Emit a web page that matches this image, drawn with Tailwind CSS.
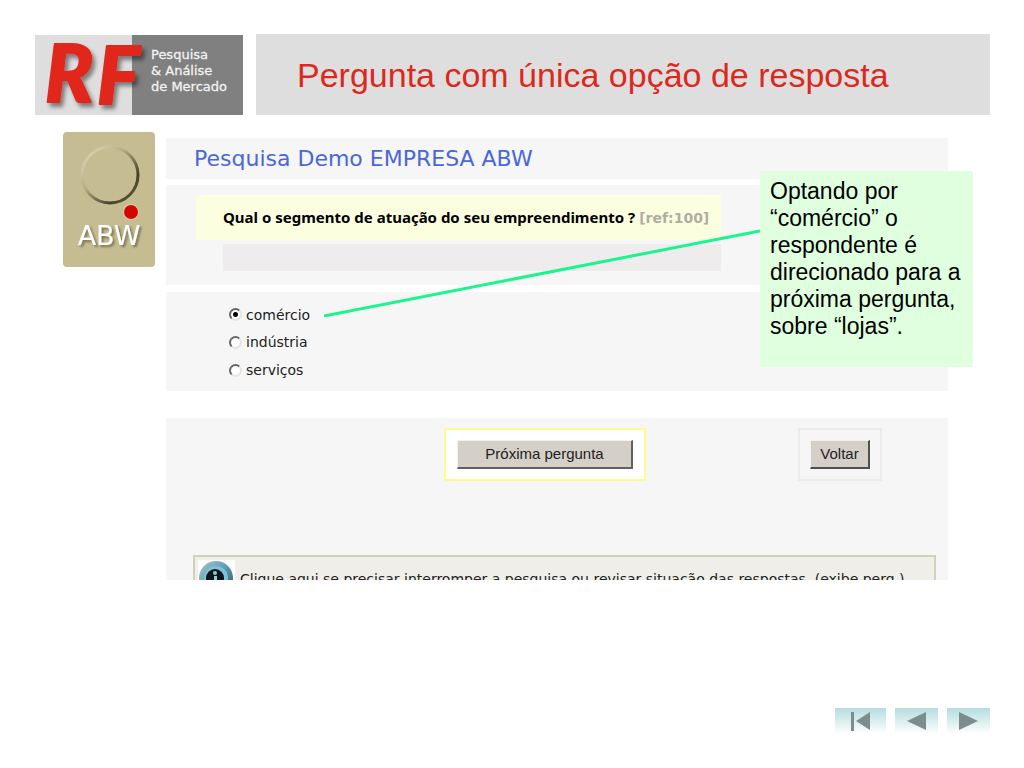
<!DOCTYPE html>
<html lang="pt-BR">
<head>
  <meta charset="UTF-8" />
  <meta name="viewport" content="width=device-width, initial-scale=1.0" />
  <title>Pesquisa Demo EMPRESA ABW</title>
  <script src="https://cdn.jsdelivr.net/npm/@tailwindcss/browser@4"></script>
</head>
<body class="min-h-screen flex flex-col bg-white text-black font-['Liberation_Sans',Arial,sans-serif]">

<header class="flex gap-[13px] pl-[35px] pr-[34px] pt-[34px]">
  <svg class="w-[208px] h-[81px] shrink-0 overflow-visible" viewBox="0 0 208 81" role="img" aria-label="RF Pesquisa &amp; Análise de Mercado">
    <defs>
      <filter id="logoShadow" x="-20%" y="-20%" width="150%" height="150%">
        <feDropShadow dx="3" dy="4" stdDeviation="2" flood-color="#000" flood-opacity=".45" />
      </filter>
    </defs>
    <rect y="1" width="97" height="80" fill="#dedede" />
    <rect x="97" y="1" width="111" height="80" fill="#808080" />
    <g filter="url(#logoShadow)" fill="#e1261c" stroke="#e1261c" stroke-width="2" stroke-linejoin="round" font-family="Lato, sans-serif" font-weight="900" font-style="italic">
      <text x="10" y="68" font-size="80">R</text>
      <text x="62" y="70" font-size="80">F</text>
    </g>
    <g fill="#f2f2f2" stroke="#f2f2f2" stroke-width=".3" font-family="'DejaVu Sans', sans-serif" font-size="13">
      <text x="116" y="25">Pesquisa</text>
      <text x="116" y="41">&amp; Análise</text>
      <text x="116" y="57">de Mercado</text>
    </g>
  </svg>
  <div class="flex-1 flex items-center bg-[#dedede] pl-[41px]">
    <h1 class="text-[34px] leading-10 text-[#dc291e]">Pergunta com única opção de resposta</h1>
  </div>
</header>

<main class="flex items-start gap-[11px] pl-[63px] pr-[76px] pt-[17px]">
  <!-- client badge -->
  <svg class="w-[92px] h-[135px] shrink-0" viewBox="0 0 92 135" role="img" aria-label="ABW">
    <defs>
      <linearGradient id="ring" x1="0" y1="0" x2="1" y2="1">
        <stop offset="0" stop-color="#e4dec0" />
        <stop offset=".4" stop-color="#b5ad82" />
        <stop offset=".75" stop-color="#45402a" />
        <stop offset="1" stop-color="#6b6444" />
      </linearGradient>
      <filter id="abwShadow">
        <feDropShadow dx="2" dy="2" stdDeviation="1" flood-color="#5a5436" flood-opacity=".7" />
      </filter>
    </defs>
    <rect width="92" height="135" rx="4" fill="#c5bc91" />
    <circle cx="47" cy="43" r="28" fill="none" stroke="url(#ring)" stroke-width="3" />
    <circle cx="68" cy="80" r="8" fill="#d9d09f" />
    <circle cx="68" cy="80" r="7" fill="#d30505" />
    <text x="46" y="113" text-anchor="middle" filter="url(#abwShadow)" fill="#fff" font-family="'DejaVu Sans', sans-serif" font-size="27">ABW</text>
  </svg>

  <form class="relative flex-1 pt-[6px] font-['DejaVu_Sans',Verdana,sans-serif]">
    <div class="bg-[#f6f6f6] h-[41px] pl-7 flex items-center">
      <h2 class="text-[22px] text-[#4a66dc]">Pesquisa Demo EMPRESA ABW</h2>
    </div>

    <div class="mt-[6px] bg-[#f6f6f6] pt-[10px] pb-[14px] pl-[30px]">
      <p class="w-[525px] h-[45px] flex items-center gap-1 pl-[27px] bg-[#fcffdf] text-[15px] font-bold whitespace-nowrap font-['Noto_Sans',Tahoma,sans-serif]">
        Qual o segmento de atuação do seu empreendimento ? <span class="text-sm text-[#aeaea4] font-['DejaVu_Sans',Verdana,sans-serif]">[ref:100]</span>
      </p>
      <div class="mt-[4px] ml-[27px] w-[498px] h-[27px] bg-[#eeecec]"></div>
    </div>

    <div class="mt-[7px] bg-[#f6f6f6] pt-[9px] pb-[7px] pl-[63px] text-sm text-[#222]">
      <label class="flex items-center gap-1 h-[27px]">
        <input type="radio" name="segmento" checked class="appearance-none size-[13px] rounded-full bg-white border-2 border-t-[#666] border-l-[#666] border-r-[#e4e4e4] border-b-[#e4e4e4] checked:bg-[radial-gradient(circle,#000_2px,#fff_3px)]" />
        comércio
      </label>
      <label class="flex items-center gap-1 h-7">
        <input type="radio" name="segmento" class="appearance-none size-[13px] rounded-full bg-white border-2 border-t-[#666] border-l-[#666] border-r-[#e4e4e4] border-b-[#e4e4e4] checked:bg-[radial-gradient(circle,#000_2px,#fff_3px)]" />
        indústria
      </label>
      <label class="flex items-center gap-1 h-7">
        <input type="radio" name="segmento" class="appearance-none size-[13px] rounded-full bg-white border-2 border-t-[#666] border-l-[#666] border-r-[#e4e4e4] border-b-[#e4e4e4] checked:bg-[radial-gradient(circle,#000_2px,#fff_3px)]" />
        serviços
      </label>
    </div>

    <!-- the frame cuts the help bar at its lower edge -->
    <div class="mt-[27px] h-[162px] overflow-hidden bg-[#f6f6f6] pt-[10px]">
      <div class="flex justify-between pl-[278px] pr-[66px] font-['Liberation_Sans',Arial,sans-serif] text-[15px] text-[#222]">
        <div class="border-2 border-[#fbfb90] bg-white px-[11px] py-[10px]">
          <button type="submit" class="block w-[176px] h-[29px] bg-[#d4d0c8] border border-r-2 border-b-2 border-t-[#f4f2ee] border-l-[#f4f2ee] border-r-[#606060] border-b-[#606060]">Próxima pergunta</button>
        </div>
        <div class="border-2 border-[#ececec] px-[10px] py-[10px]">
          <button type="button" class="block w-[60px] h-[29px] bg-[#d4d0c8] border border-r-2 border-b-2 border-t-[#f4f2ee] border-l-[#f4f2ee] border-r-[#505050] border-b-[#505050]">Voltar</button>
        </div>
      </div>
      <div class="mt-[74px] ml-[27px] mr-3">
        <a href="#" class="flex items-center gap-[5px] border-2 border-[#cfd2b4] bg-[#efeee8] p-[3px] text-sm whitespace-nowrap text-[#222]">
          <svg class="w-[37px] h-[37px] shrink-0 bg-white" viewBox="0 0 37 37" aria-hidden="true">
            <defs>
              <linearGradient id="info" x1="0" y1="0" x2="1" y2="1">
                <stop offset="0" stop-color="#b4c2ca" />
                <stop offset=".45" stop-color="#5fa0b8" />
                <stop offset="1" stop-color="#38505c" />
              </linearGradient>
            </defs>
            <circle cx="18" cy="18" r="17" fill="url(#info)" />
            <circle cx="18" cy="18" r="12" fill="#7cc3da" />
            <circle cx="17" cy="18" r="9" fill="#101618" />
            <circle cx="17" cy="13" r="2" fill="#8ccbe0" />
            <rect x="16" y="16" width="3" height="8" fill="#8ccbe0" />
          </svg>
          Clique aqui se precisar interromper a pesquisa ou revisar situação das respostas. (exibe perg.)
        </a>
      </div>
    </div>

    <!-- callout and its pointer line -->
    <div class="absolute left-[158px] right-[188px] top-[97px] h-[88px]">
      <svg class="w-full h-full" viewBox="0 0 435 88" preserveAspectRatio="none" aria-hidden="true">
        <line x1="0" y1="87" x2="435" y2="2" stroke="#1cf58e" stroke-width="3" />
      </svg>
    </div>
    <aside class="absolute top-[39px] -right-[25px] w-[213px] h-[196px] bg-[#dfffdf] pl-[10px] pt-[7px] text-[23px] leading-[27px] font-['Liberation_Sans',Arial,sans-serif]">
      Optando por “comércio” o respondente é direcionado para a próxima pergunta, sobre “lojas”.
    </aside>
  </form>
</main>

<nav class="mt-auto flex justify-end gap-[9px] pr-[34px] pb-[34px]" aria-label="Slides">
  <button type="button" aria-label="Primeiro" class="w-[51px] h-[26px] bg-linear-to-b from-[#b4dcdf] to-white">
    <svg class="w-full h-full" viewBox="0 0 51 26" fill="#7f8c8c"><rect x="16" y="4" width="3" height="19" /><path d="M21 13 35 4v18z" /></svg>
  </button>
  <button type="button" aria-label="Anterior" class="w-[43px] h-[26px] bg-linear-to-b from-[#b4dcdf] to-white">
    <svg class="w-full h-full" viewBox="0 0 43 26" fill="#7f8c8c"><path d="M12 13 31 4v18z" /></svg>
  </button>
  <button type="button" aria-label="Próximo" class="w-[43px] h-[26px] bg-linear-to-b from-[#b4dcdf] to-white">
    <svg class="w-full h-full" viewBox="0 0 43 26" fill="#7f8c8c"><path d="M31 13 12 4v18z" /></svg>
  </button>
</nav>

</body>
</html>
